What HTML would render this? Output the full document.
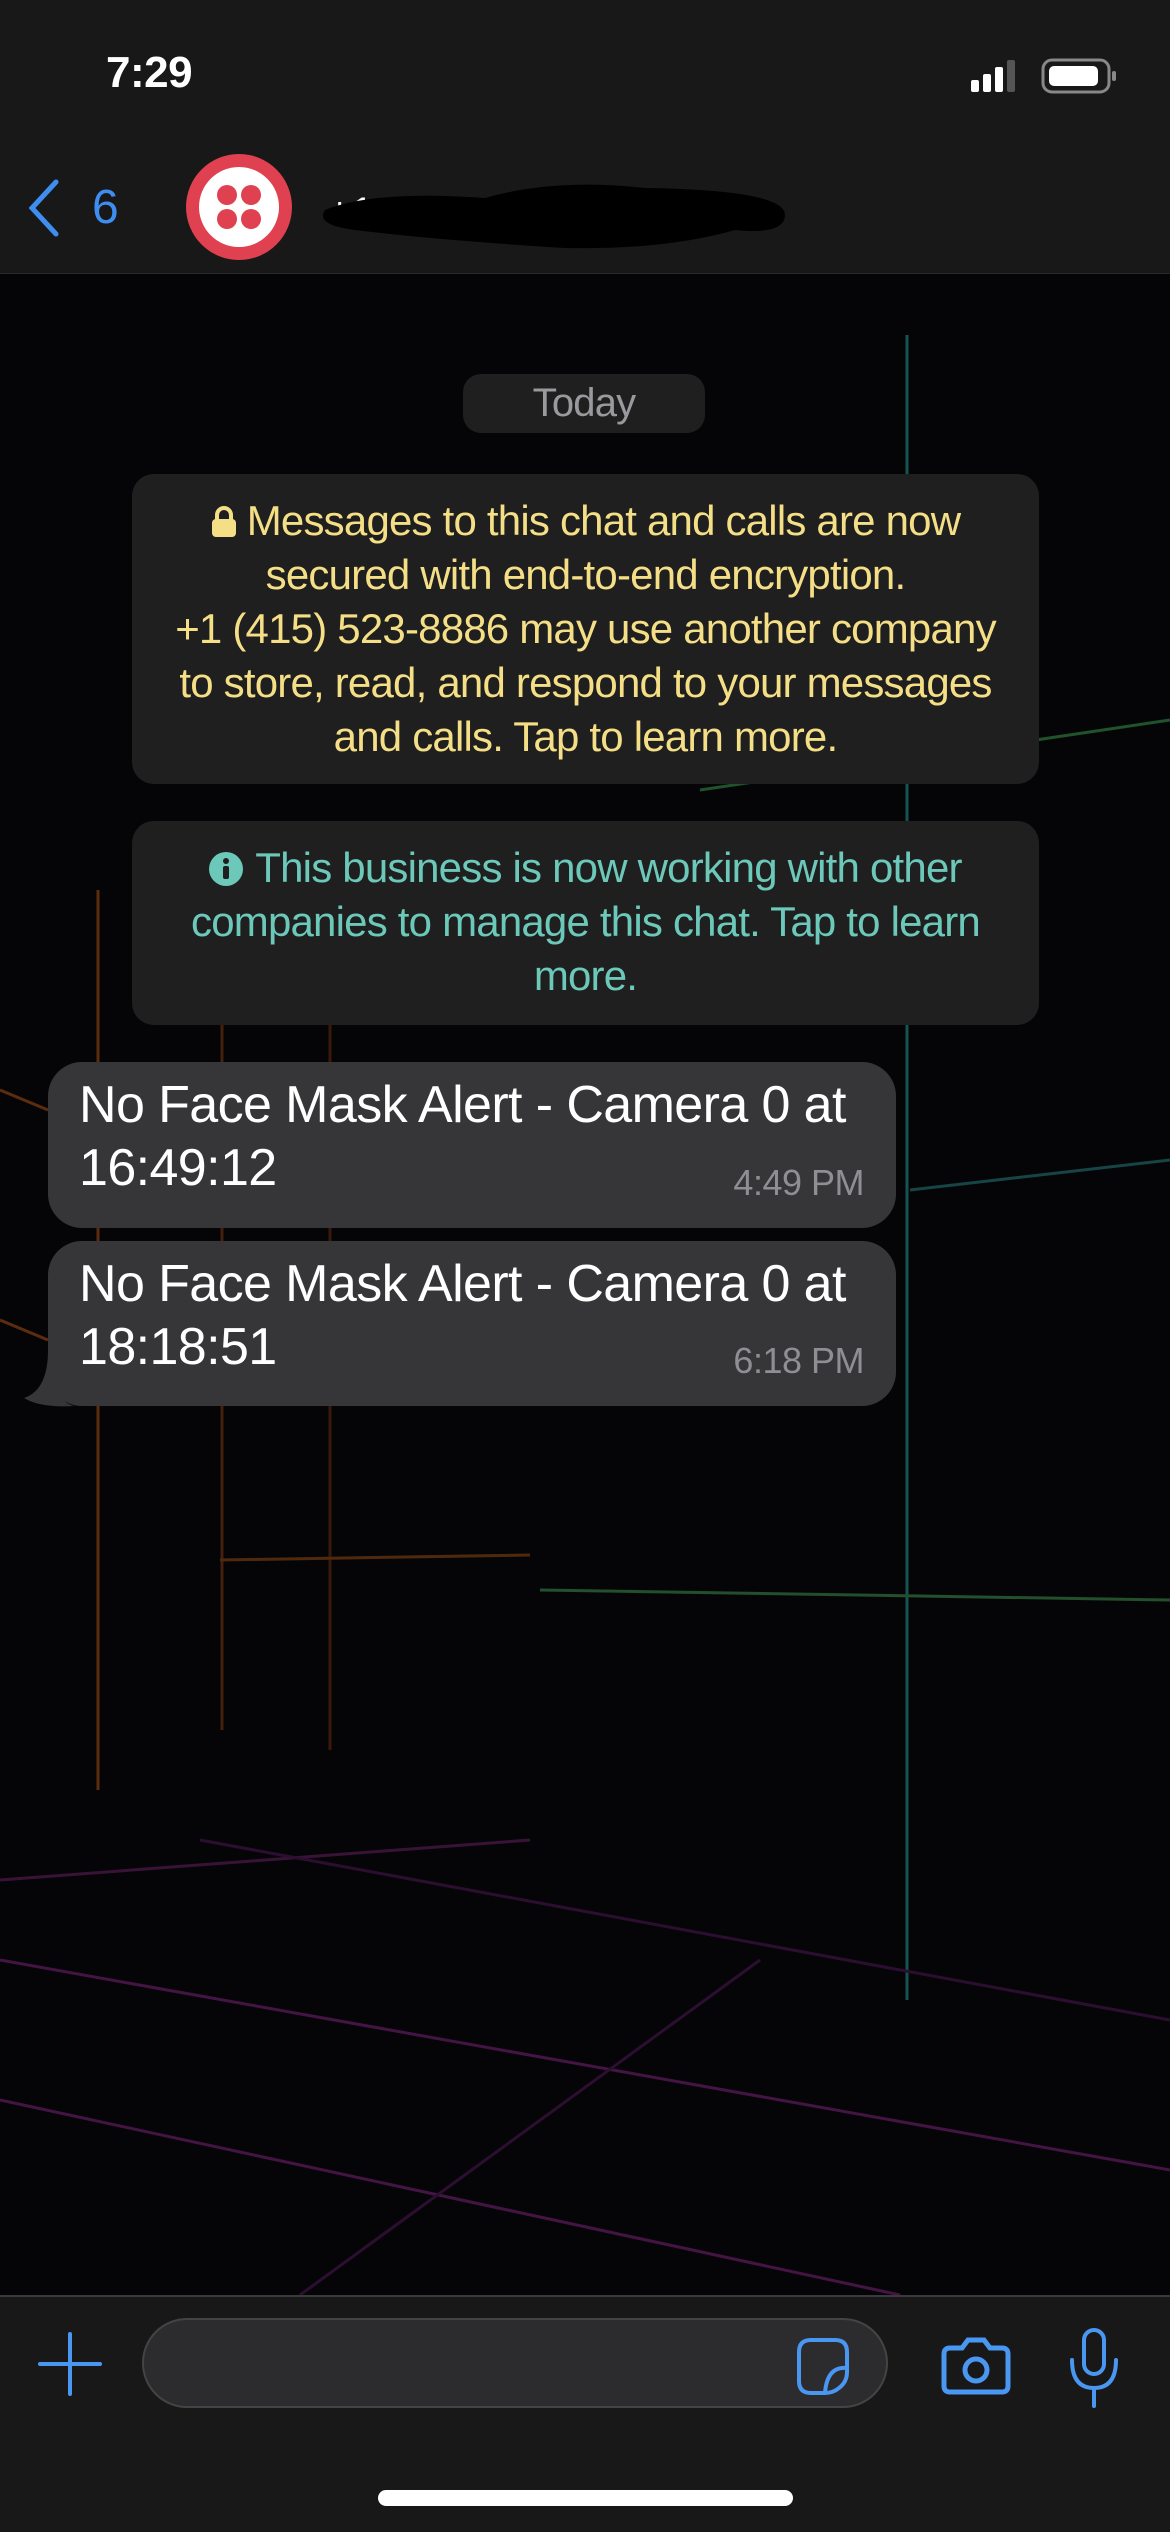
<!DOCTYPE html>
<html><head><meta charset="utf-8"><style>
*{margin:0;padding:0;box-sizing:border-box}
body{width:1170px;height:2532px;background:#050507;position:relative;overflow:hidden;font-family:"Liberation Sans",sans-serif}
.abs{position:absolute}
.sys{background:#1f1f20;border-radius:26px;text-align:center;font-size:42px;line-height:54px;letter-spacing:-0.8px;white-space:nowrap}
.bub{background:#363638;border-radius:34px;left:48px;width:848px;color:#fff;font-size:52px;line-height:63px;padding:12px 0 0 31px;letter-spacing:-0.6px;white-space:nowrap}
.tm{position:absolute;right:32px;bottom:14px;font-size:36px;color:#8e8e93;letter-spacing:-0.5px}
</style></head><body>
<svg class="abs" style="left:0;top:274px" width="1170" height="2021" viewBox="0 274 1170 2021">
<g fill="none" stroke-width="3" opacity="0.75">
<line x1="907" y1="335" x2="907" y2="2000" stroke="#1e6e6a" />
<line x1="700" y1="790" x2="1170" y2="720" stroke="#2a6e3a"/>
<line x1="540" y1="1590" x2="1170" y2="1600" stroke="#2d6a3a"/>
<line x1="1170" y1="1160" x2="910" y2="1190" stroke="#1e5a5a"/>
<line x1="98" y1="890" x2="98" y2="1790" stroke="#7a3a12"/>
<line x1="222" y1="960" x2="222" y2="1730" stroke="#5a2a10"/>
<line x1="330" y1="1000" x2="330" y2="1750" stroke="#4a200e"/>
<line x1="0" y1="1090" x2="48" y2="1110" stroke="#7a3a12"/>
<line x1="0" y1="1320" x2="48" y2="1340" stroke="#7a3a12"/>
<line x1="220" y1="1560" x2="530" y2="1555" stroke="#6a3510"/>
<line x1="0" y1="1880" x2="530" y2="1840" stroke="#4a1848"/>
<line x1="0" y1="1960" x2="1170" y2="2170" stroke="#5a1a5a"/>
<line x1="0" y1="2100" x2="900" y2="2295" stroke="#5a1a5a"/>
<line x1="200" y1="1840" x2="1170" y2="2020" stroke="#3a1240"/>
<line x1="300" y1="2295" x2="760" y2="1960" stroke="#3a1240"/>
</g></svg>
<div class="abs" style="left:0;top:0;width:1170px;height:274px;background:#181818;border-bottom:1px solid #2a2a2a"></div>
<div class="abs" style="left:106px;top:48px;color:#fff;font-size:44px;font-weight:bold;letter-spacing:-0.5px">7:29</div>
<svg class="abs" style="left:968px;top:56px" width="150" height="40">
<rect x="3" y="24" width="8" height="12" rx="2" fill="#fff"/><rect x="15" y="18" width="8" height="18" rx="2" fill="#fff"/><rect x="27" y="11" width="8" height="25" rx="2" fill="#fff"/><rect x="39" y="4" width="8" height="32" rx="2" fill="#555"/>
<rect x="75" y="4" width="66" height="32" rx="9" fill="none" stroke="#888" stroke-width="3"/><rect x="81" y="10" width="49" height="20" rx="5" fill="#fff"/><rect x="144" y="15" width="4" height="10" rx="2" fill="#888"/>
</svg>
<svg class="abs" style="left:24px;top:178px" width="40" height="60"><path d="M32 4 L8 30 L32 56" fill="none" stroke="#3d8ef0" stroke-width="5" stroke-linecap="round"/></svg>
<div class="abs" style="left:92px;top:180px;color:#3d8ef0;font-size:48px">6</div>
<svg class="abs" style="left:186px;top:154px" width="106" height="106"><circle cx="53" cy="53" r="53" fill="#e04150"/><circle cx="53" cy="53" r="40" fill="#fff"/><circle cx="41" cy="41" r="10" fill="#e04150"/><circle cx="65" cy="41" r="10" fill="#e04150"/><circle cx="41" cy="65" r="10" fill="#e04150"/><circle cx="65" cy="65" r="10" fill="#e04150"/></svg>
<div class="abs" style="left:328px;top:190px;color:#fff;font-size:40px">+1</div>
<svg class="abs" style="left:315px;top:170px" width="480" height="90"><path d="M10 40 Q60 20 170 28 Q240 8 330 18 Q470 20 470 45 Q470 65 420 60 Q350 80 250 78 Q120 70 40 60 Q0 55 10 40Z" fill="#000"/></svg>
<div class="abs sys" style="left:463px;top:374px;width:242px;height:59px;color:#9a9a9e;font-size:40px;line-height:59px;border-radius:18px">Today</div>
<div class="abs sys" style="left:132px;top:474px;width:907px;height:310px;color:#f5df86;padding-top:20px;border-radius:22px">
<svg width="26" height="32" style="vertical-align:-3px;margin-right:10px" viewBox="0 0 26 32"><path d="M6 14 V9 a7 7 0 0 1 14 0 V14" fill="none" stroke="#f5df86" stroke-width="4"/><rect x="1" y="13" width="24" height="18" rx="4" fill="#f5df86"/></svg>Messages to this chat and calls are now<br>secured with end-to-end encryption.<br>+1 (415) 523-8886 may use another company<br>to store, read, and respond to your messages<br>and calls. Tap to learn more.</div>
<div class="abs sys" style="left:132px;top:821px;width:907px;height:204px;color:#6cc9ba;padding-top:20px;border-radius:22px">
<svg width="34" height="34" style="vertical-align:-4px;margin-right:12px" viewBox="0 0 34 34"><circle cx="17" cy="17" r="17" fill="#6cc9ba"/><circle cx="17" cy="9" r="3" fill="#1f1f20"/><rect x="14" y="14" width="6" height="13" rx="2" fill="#1f1f20"/></svg>This business is now working with other<br>companies to manage this chat. Tap to learn<br>more.</div>
<div class="abs bub" style="top:1062px;height:166px">No Face Mask Alert - Camera 0 at<br>16:49:12<span class="tm">4:49 PM</span></div>
<svg class="abs" style="left:20px;top:1350px" width="60" height="60"><path d="M40 0 V40 Q40 52 54 56 Q20 58 4 48 Q28 40 28 0Z" fill="#363638"/></svg>
<div class="abs bub" style="top:1241px;height:165px">No Face Mask Alert - Camera 0 at<br>18:18:51<span class="tm">6:18 PM</span></div>
<div class="abs" style="left:0;top:2295px;width:1170px;height:237px;background:#181818;border-top:2px solid #3a3a3c"></div>
<svg class="abs" style="left:38px;top:2332px" width="64" height="64"><path d="M32 2 V62 M2 32 H62" stroke="#4a97f2" stroke-width="4" stroke-linecap="round"/></svg>
<div class="abs" style="left:142px;top:2318px;width:746px;height:90px;background:#2c2c2e;border:2px solid #444;border-radius:45px"></div>
<svg class="abs" style="left:795px;top:2336px" width="60" height="60" viewBox="0 0 60 60"><path d="M16 4 H40 Q52 4 52 16 V36 Q52 46 44 52 Q38 57 30 57 H16 Q4 57 4 45 V16 Q4 4 16 4Z M52 32 Q32 30 30 57" fill="none" stroke="#4a97f2" stroke-width="4"/></svg>
<svg class="abs" style="left:940px;top:2336px" width="72" height="60" viewBox="0 0 72 60"><path d="M10 12 H22 L28 4 H44 L50 12 H62 Q68 12 68 18 V50 Q68 56 62 56 H10 Q4 56 4 50 V18 Q4 12 10 12Z" fill="none" stroke="#4a97f2" stroke-width="5"/><circle cx="36" cy="34" r="11" fill="none" stroke="#4a97f2" stroke-width="5"/></svg>
<svg class="abs" style="left:1066px;top:2326px" width="56" height="84" viewBox="0 0 56 84"><rect x="18" y="4" width="20" height="44" rx="10" fill="none" stroke="#4a97f2" stroke-width="4"/><path d="M6 34 Q6 62 28 62 Q50 62 50 34 M28 62 V80" fill="none" stroke="#4a97f2" stroke-width="4" stroke-linecap="round"/></svg>
<div class="abs" style="left:378px;top:2490px;width:415px;height:16px;background:#fff;border-radius:8px"></div>
</body></html>
